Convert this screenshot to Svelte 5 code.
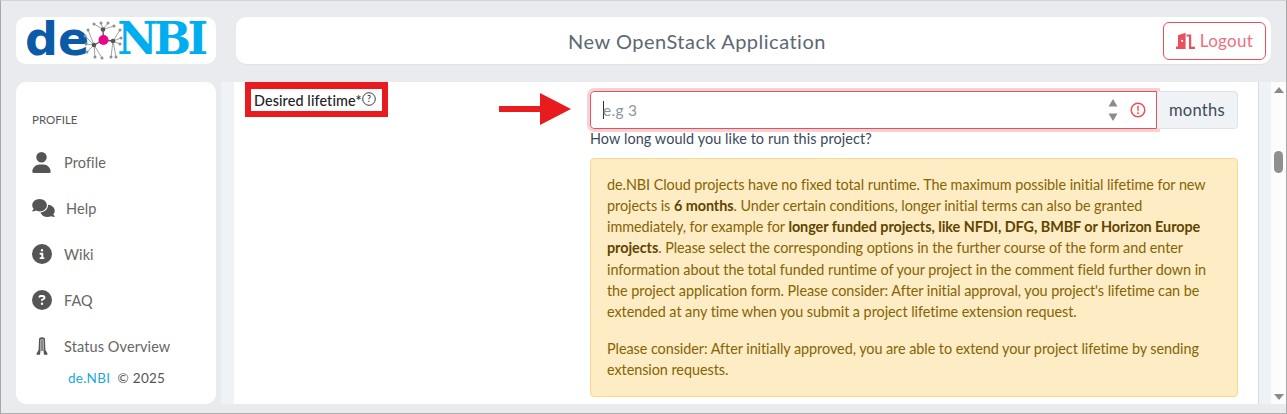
<script>
  const nav = [
    { label: 'Profile', icon: 'user' },
    { label: 'Help', icon: 'comments' },
    { label: 'Wiki', icon: 'info' },
    { label: 'FAQ', icon: 'question' },
    { label: 'Status Overview', icon: 'tower' }
  ];
  const hubs = [
    { x: 104, y: 29.5, ends: [[95,24],[102,23],[109,23],[115,26]] },
    { x: 95, y: 45, ends: [[89,30],[86,36],[87,44],[88,52],[96,57],[103,58]] },
    { x: 114, y: 41, ends: [[121,30],[122,38],[121,44],[117,57],[112,57]] }
  ];
</script>

<div class="page">
  <div class="top">
    <div class="logo">
      <span class="de">de</span>
      <svg class="mark" viewBox="84 20 42 42" width="42" height="42" aria-hidden="true">
        {#each hubs as h}
          {#each h.ends as e}
            <line x1={h.x} y1={h.y} x2={e[0]} y2={e[1]} stroke="#8a8a8a" stroke-width=".8"/>
            <circle cx={e[0]} cy={e[1]} r="1.500" fill="#8f8f8f"/>
          {/each}
          <line x1={h.x} y1={h.y} x2="104.500" y2="40" stroke="#555" stroke-width="1.300"/>
          <circle cx={h.x} cy={h.y} r="2.300" fill="#555"/>
        {/each}
        <circle cx="104.500" cy="40" r="5" fill="#ec008c"/>
      </svg>
      <span class="nbi">NBI</span>
    </div>
    <header class="bar">
      <div class="title">New OpenStack Application</div>
      <button class="logout">
        <svg viewBox="0 0 20 17" width="20" height="17" aria-hidden="true">
          <path d="M2 14.500V3.200L9.600 .8V17H0v-2.500z M6.600 8a1 1 0 1 0 0 1.800 1 1 0 0 0 0-1.800z" fill="#e8505b" fill-rule="evenodd"/>
          <path d="M10.500 2.500h4.700v12.200H19v2.200h-6V4.600h-2.500z" fill="#e8505b"/>
        </svg>
        <span>Logout</span>
      </button>
    </header>
  </div>

  <div class="body">
    <aside class="side">
      <div class="heading">PROFILE</div>
      <nav>
        {#each nav as item}
          <div class="item">
            <span class="ico">
              {#if item.icon === 'user'}
                <svg viewBox="0 0 448 512" width="19" height="21"><path fill="#555" d="M224 256a128 128 0 1 0 0-256 128 128 0 1 0 0 256zm-45.700 48C79.800 304 0 383.800 0 482.300 0 498.700 13.300 512 29.700 512h388.600c16.400 0 29.700-13.300 29.700-29.700 0-98.500-79.800-178.300-178.300-178.300h-91.400z"/></svg>
              {:else if item.icon === 'comments'}
                <svg viewBox="0 0 640 512" width="23" height="18"><path fill="#555" d="M208 352c114.900 0 208-78.800 208-176S322.900 0 208 0 0 78.800 0 176c0 38.600 14.700 74.300 39.600 103.400-3.500 9.400-8.700 17.700-14.200 24.700-4.800 6.200-9.700 11-13.300 14.300-1.800 1.600-3.300 2.900-4.300 3.700-.5.400-.9.700-1.100.8l-.2.200C1 327.200-1.400 334.400.8 340.900S9.100 352 16 352c21.800 0 43.800-5.600 62.100-12.500 9.200-3.500 17.800-7.400 25.300-11.400C134.100 343.300 169.800 352 208 352zm240-176c0 112.300-99.100 196.900-216.500 207C255.800 457.800 336.100 512 432 512c38.200 0 73.900-8.700 104.700-23.900 7.500 4 16 7.900 25.200 11.400 18.300 6.900 40.300 12.500 62.100 12.500 6.900 0 13.100-4.500 15.200-11.100 2.100-6.600-.2-13.800-5.800-17.900l-.2-.2c-.2-.2-.6-.4-1.100-.8-1-.8-2.500-2-4.300-3.700-3.600-3.300-8.500-8.100-13.300-14.300-5.500-7-10.700-15.400-14.200-24.700 24.900-29 39.600-64.700 39.600-103.400 0-92.800-84.900-168.900-192.600-175.500.4 5.100.6 10.300.6 15.500z"/></svg>
              {:else if item.icon === 'info'}
                <svg viewBox="0 0 512 512" width="20" height="20"><path fill="#555" d="M256 512a256 256 0 1 0 0-512 256 256 0 1 0 0 512zm-40-176h24v-64h-24c-13.300 0-24-10.700-24-24s10.700-24 24-24h48c13.300 0 24 10.700 24 24v88h8c13.300 0 24 10.700 24 24s-10.700 24-24 24h-80c-13.300 0-24-10.700-24-24s10.700-24 24-24zm40-208a32 32 0 1 1 0 64 32 32 0 1 1 0-64z"/></svg>
              {:else if item.icon === 'question'}
                <svg viewBox="0 0 512 512" width="20" height="20"><path fill="#555" d="M256 512a256 256 0 1 0 0-512 256 256 0 1 0 0 512zm-86.200-346.700c7.900-22.300 29.100-37.300 52.800-37.300h58.300c34.900 0 63.100 28.300 63.100 63.100 0 22.600-12.100 43.500-31.700 54.800L280 264.400c-.2 13-10.900 23.600-24 23.600-13.300 0-24-10.700-24-24v-13.500c0-8.600 4.600-16.500 12.100-20.800l44.300-25.400c4.700-2.700 7.600-7.700 7.600-13.100 0-8.400-6.800-15.100-15.100-15.100h-58.300c-3.400 0-6.400 2.100-7.500 5.300l-.4 1.200c-4.400 12.500-18.200 19-30.600 14.600s-19-18.200-14.600-30.600l.4-1.200zM224 352a32 32 0 1 1 64 0 32 32 0 1 1-64 0z"/></svg>
              {:else}
                <svg class="tower" viewBox="0 0 12 18" width="12" height="18"><path fill="#555" d="M3 2.500C3 1 4 .2 6 .2s3 .8 3 2.300l.4 10.500 2 3.200v1.600H8l-.5-3.500V2.500H4.500v11.800L4 17.800H.6v-1.600l2-3.200z"/><path fill="#555" d="M5.300 3h1.400v11H5.300z"/></svg>
              {/if}
            </span>
            <span class="lbl" class:help={item.icon === 'comments'}>{item.label}</span>
          </div>
        {/each}
      </nav>
      <div class="copy"><span class="link">de.NBI</span>&nbsp; © 2025</div>
    </aside>

    <main class="main">
      <div class="content">
        <div class="left">
          <div class="label-box">Desired lifetime*<svg class="help-ico" viewBox="0 0 16 16" width="14" height="14"><circle cx="8" cy="8" r="7.200" fill="none" stroke="#222" stroke-width="1"/><text x="8" y="11.500" text-anchor="middle" font-size="10" fill="#222" font-family="Lato, sans-serif">?</text></svg></div>
          <svg class="arrow" viewBox="0 0 72 32" width="72" height="32" aria-hidden="true">
            <path d="M0 13h41V0l31 16-31 16V19H0z" fill="#e81c1f"/>
          </svg>
        </div>
        <div class="right">
          <div class="group">
            <div class="input">
              <span class="ph"><i class="caret"></i>e.g 3</span>
              <svg class="spin" viewBox="0 0 10 24" width="10" height="24"><path d="M5 1l4.500 7.500H.500z M5 23L.500 15.500h9z" fill="#8c8c8c"/></svg>
              <svg class="err" viewBox="0 0 16 16" width="16" height="16"><circle cx="8" cy="8" r="6.800" fill="none" stroke="#e8505b" stroke-width="1.500"/><path d="M7.200 3.800h1.600l-.2 5.500H7.400z" fill="#e8505b"/><circle cx="8" cy="11.300" r="1" fill="#e8505b"/></svg>
            </div>
            <div class="addon">months</div>
          </div>
          <div class="hint">How long would you like to run this project?</div>
          <div class="alert">
            <p>de.NBI Cloud projects have no fixed total runtime. The maximum possible initial lifetime for new projects is <b>6 months</b>. Under certain conditions, longer initial terms can also be granted immediately, for example for <b>longer funded projects, like NFDI, DFG, BMBF or Horizon Europe projects</b>. Please select the corresponding options in the further course of the form and enter information about the total funded runtime of your project in the comment field further down in the project application form. Please consider: After initial approval, you project's lifetime can be extended at any time when you submit a project lifetime extension request.</p>
            <p>Please consider: After initially approved, you are able to extend your project lifetime by sending extension requests.</p>
          </div>
        </div>
      </div>
      <div class="gutter"></div>
      <div class="scrollbar">
        <svg viewBox="0 0 10 6" width="10" height="6"><path d="M5 0l5 6H0z" fill="#8a8a8a"/></svg>
        <div class="thumb"></div>
        <svg class="down" viewBox="0 0 10 6" width="10" height="6"><path d="M5 6L0 0h10z" fill="#8a8a8a"/></svg>
      </div>
    </main>
  </div>
</div>

<style>
  :global(body) { margin: 0; background: #e9ebee; }
  .page {
    box-sizing: border-box;
    width: 1287px; height: 414px; overflow: hidden;
    background: #e9ebee;
    border-top: 1px solid #d2d2d2;
    border-left: 1px solid #a8a8a8;
    border-right: 1px solid #a8a8a8;
    border-bottom: 1px solid #b0b0b0;
    padding: 16px 0 9px 15px;
    display: flex; flex-direction: column; gap: 18px;
    font-family: "Lato", "Open Sans", sans-serif;
    color: #23282c;
    font-size: 14.4px;
  }
  .top { display: flex; gap: 20px; height: 47px; margin-right: 15px; }
  .logo {
    width: 200px; box-sizing: border-box; background: #fff; border-radius: 10px; padding-left: 9px;
    display: flex; align-items: center;
    font-weight: 700; line-height: 1;
  }
  .de { color: #0a5aa8; font-family: "DejaVu Sans", sans-serif; font-size: 46px; margin-top: -3px; }
  .nbi { color: #00aeef; font-family: "DejaVu Serif", serif; font-size: 44px; margin-left: -8px; letter-spacing: -3.500px; margin-top: -3px; }
  .mark { margin-left: -6px; flex: none; position: relative; z-index: 1; }
  .bar {
    flex: 1; background: #fff; border-radius: 10px;
    display: flex; align-items: center; padding: 0 5px 0 0;
    box-shadow: 0 1px 0 #dfe2e6;
  }
  .title { flex: 1; text-align: center; font-size: 20px; color: #5c6873; letter-spacing: .5px; padding-right: 5px; }
  .logout {
    width: 103px; height: 38px; box-sizing: border-box;
    border: 1px solid #e8505b; border-radius: 6px; background: #fff;
    color: #ee6f7f; font: inherit; font-size: 17px; letter-spacing: .3px;
    display: flex; align-items: center; justify-content: center; gap: 4px; padding: 0;
  }
  .body { flex: 1; display: flex; min-height: 0; gap: 5px; }
  .side {
    width: 200px; flex: none; background: #fff; border-radius: 10px;
    box-sizing: border-box; padding: 30px 0 0 16px;
    display: flex; flex-direction: column; color: #5c5c5c;
  }
  .heading { font-size: 11.500px; line-height: 15px; color: #555; }
  nav { margin-top: 12px; display: flex; flex-direction: column; }
  .item { height: 46px; display: flex; align-items: center; }
  .ico { width: 32px; display: flex; justify-content: flex-start; }
  .tower { margin-left: 4px; }
  .lbl { font-size: 14.500px; color: #666; letter-spacing: .1px; }
  .lbl.help { margin-left: 2px; }
  .copy { font-size: 13.500px; margin: 1px 0 0 36px; color: #555; letter-spacing: .25px; }
  .link { color: #20a8d8; }
  .main {
    flex: 1; display: flex; min-width: 0;
    background: #f0f3f5; padding-left: 13px;
  }
  .content {
    flex: 1; background: #fff; display: flex; overflow: hidden; min-width: 0;
    border-right: 1px solid #d8dbe0;
    padding-left: 11px; box-sizing: border-box;
  }
  .gutter { width: 12px; flex: none; }
  .left { width: 345px; flex: none; display: flex; flex-direction: column; position: relative; }
  .label-box {
    box-sizing: border-box; width: 143px; height: 35px;
    border: 6px solid #e81c1f; border-top-width: 7px;
    display: flex; align-items: center; font-size: 14.400px; font-weight: 500; color: #1d2226; padding-left: 3px; white-space: nowrap;
    letter-spacing: .1px;
  }
  .help-ico { margin-left: 0; margin-bottom: 3px; }
  .arrow { position: absolute; left: 254px; top: 11px; }
  .right { width: 648px; flex: none; padding-top: 9px; }
  .group { display: flex; height: 38px; }
  .input {
    flex: 1; box-sizing: border-box; border: 1px solid #e8505b; border-radius: 4px 0 0 4px;
    outline: 3px solid #f7d2d4; display: flex; align-items: center; padding: 0 10px 0 12px;
    background: #fff;
  }
  .ph { flex: 1; color: #8a96a0; font-size: 15.500px; display: flex; align-items: center; letter-spacing: .3px; }
  .caret { display: inline-block; width: 1px; height: 18px; background: #333; margin-right: -1px; }
  .spin { margin-right: 12px; }
  .addon {
    width: 81px; box-sizing: border-box; background: #f0f3f5; border: 1px solid #e0e3e8; border-left: 0;
    border-radius: 0 4px 4px 0; display: flex; align-items: center; justify-content: center; font-size: 16.500px; color: #3d4a5c; letter-spacing: .3px;
  }
  .hint { font-size: 14.400px; color: #3a4a5c; line-height: 20px; letter-spacing: .1px; }
  .alert {
    box-sizing: border-box; margin-top: 9px; height: 239px;
    background: #feecc5; border: 1px solid #fcd98a; border-radius: 4px;
    padding: 14.500px 16px 0; color: #856404; font-size: 14.400px; line-height: 21.300px; letter-spacing: -.05px;
  }
  .alert p { margin: 0 0 15px; }
  .alert b { font-weight: 700; color: #5e4500; }
  .scrollbar {
    width: 15px; flex: none; background: #fcfcfc; display: flex; flex-direction: column; align-items: center;
    padding: 5px 0 4px; box-sizing: border-box;
  }
  .thumb { width: 9px; height: 22px; border-radius: 5px; background: #8f8f8f; margin-top: 58px; }
  .down { margin-top: auto; }
</style>
